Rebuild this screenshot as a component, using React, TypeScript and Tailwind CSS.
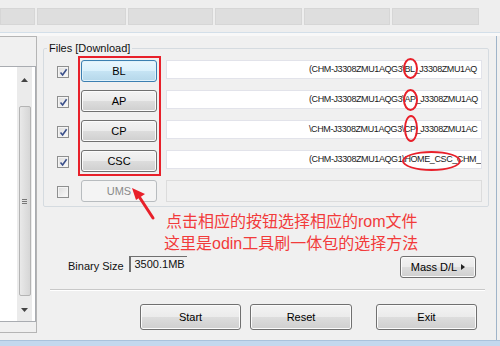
import React from 'react';

const ui = "font-['Liberation_Sans_Narrow','Liberation_Sans',Arial,sans-serif]";
const cjk = "font-['Liberation_Sans','Noto_Sans_CJK_SC',sans-serif]";

const topTabs = [35, 89, 85, 87, 86, 87];

const files = [
  { label: 'BL', path: '(CHM-J3308ZMU1AQG3\\BL_J3308ZMU1AQ', focused: true },
  { label: 'AP', path: '(CHM-J3308ZMU1AQG3\\AP_J3308ZMU1AQ' },
  { label: 'CP', path: '\\CHM-J3308ZMU1AQG3\\CP_J3308ZMU1AC' },
  { label: 'CSC', path: '(CHM-J3308ZMU1AQG1\\HOME_CSC_CHM_' },
];

const Check = ({ checked }: { checked: boolean }) => (
  <div className="mt-[6px] flex h-[12px] w-[12px] items-center justify-center border border-[#8e8f8f] bg-[linear-gradient(135deg,#dcdcdc,#fbfbfb)] shadow-[inset_0_0_0_1px_#f4f4f4]">
    {checked && (
      <svg width="9" height="9" viewBox="0 0 9 9">
        <path d="M1.5 4.5 L3.6 7 L7.6 1.2" fill="none" stroke="#3a4f8a" strokeWidth="1.6" />
      </svg>
    )}
  </div>
);

const WinButton = ({
  children,
  focused,
  disabled,
  className,
}: {
  children: React.ReactNode;
  focused?: boolean;
  disabled?: boolean;
  className: string;
}) => {
  let look =
    'border-[#707070] bg-[linear-gradient(#f3f3f3_0%,#ebebeb_50%,#dddddd_50%,#cfcfcf_100%)] text-black shadow-[inset_0_0_0_1px_#fbfbfb]';
  if (focused)
    look =
      'border-[#3c7fb1] bg-[linear-gradient(#eaf6fd_0%,#d9f0fc_50%,#c6e4f4_50%,#b5d7ea_100%)] text-black shadow-[inset_0_0_0_1px_#e0f2fb]';
  if (disabled) look = 'border-[#b8bcbf] bg-[#f4f4f4] text-[#8a8a8a]';
  return (
    <div className={`flex items-center justify-center rounded-[3px] border text-[11px] ${look} ${className}`}>
      {children}
    </div>
  );
};

export default function App() {
  return (
    <div className={`relative h-[346px] w-[500px] overflow-hidden bg-[#f0f0f0] ${ui}`}>
      {/* top strip */}
      <div className="h-[33px] border-b border-[#d3dfe9] bg-[#eeeeee] pt-[8px]">
        <div className="flex gap-[2px]">
          {topTabs.map((w, i) => (
            <div key={i} style={{ width: w }} className="h-[17px] border border-[#d6d6d6] bg-[#dedede]" />
          ))}
        </div>
      </div>
      <div className="h-[3px] bg-[#f8f8f8]" />

      <div className="flex h-[304px]">
        {/* left log panel */}
        <div className="h-[297px] w-[37px] border-t border-r border-b border-[#b5b5b5] pt-[29px]">
          <div className="flex h-[256px] w-[36px] border-t border-r border-b border-[#a9acb1] bg-white">
            <div className="w-[17px]" />
            <div className="flex w-[15px] flex-col items-center bg-[#ebebeb]">
              <svg width="7" height="4" viewBox="0 0 7 4" className="mt-[11px]">
                <path d="M0 4 L3.5 0 L7 4 Z" fill="#444" />
              </svg>
              <div className="mt-[24px] flex h-[190px] w-[12px] flex-col items-center justify-center rounded-[2px] border border-[#b4b4b4] bg-[linear-gradient(90deg,#e9e9e9,#d6d6d6)]">
                <div className="h-[1px] w-[5px] bg-[#777]" />
                <div className="mt-[1px] h-[1px] w-[5px] bg-[#777]" />
                <div className="mt-[1px] h-[1px] w-[5px] bg-[#777]" />
              </div>
              <svg width="7" height="4" viewBox="0 0 7 4" className="mt-[12px]">
                <path d="M0 0 L3.5 4 L7 0 Z" fill="#444" />
              </svg>
            </div>
          </div>
        </div>

        {/* main */}
        <div className="h-[304px] w-[460px] border-r border-[#9fb4c9]">
          <fieldset className="ml-[6px] mt-[6px] w-[446px] rounded-[2px] border border-[#d5dbe0] px-0 pt-[5px] pb-[4px]">
            <legend className="ml-[3px] px-[2px] text-[11px] leading-[13px] text-[#111]">Files [Download]</legend>
            <div className="flex flex-col gap-[8px]">
              {files.map((f) => (
                <div key={f.label} className="flex h-[22px] items-start">
                  <div className="ml-[13px]">
                    <Check checked />
                  </div>
                  <WinButton focused={f.focused} className="ml-[12px] h-[22px] w-[76px]">
                    {f.label}
                  </WinButton>
                  <div className="ml-[9px] h-[19px] w-[316px] overflow-hidden whitespace-nowrap border border-[#e2e3ea] bg-white pl-[142px] text-[9px] leading-[17px] tracking-[-0.4px] text-[#1a1a1a]">
                    {f.path}
                  </div>
                </div>
              ))}
              <div className="flex h-[22px] items-start">
                <div className="ml-[13px]">
                  <Check checked={false} />
                </div>
                <WinButton disabled className="ml-[12px] h-[22px] w-[76px]">
                  UMS
                </WinButton>
                <div className="ml-[9px] h-[22px] w-[316px] border border-[#dcdcdc] bg-[#f0f0f0]" />
              </div>
            </div>
          </fieldset>

          {/* annotation text */}
          <div className={`mt-[4px] pl-[129px] text-[16px] leading-[22px] text-[#f23b3b] ${cjk}`}>
            <div>点击相应的按钮选择相应的rom文件</div>
            <div className="-ml-[2px]">这里是odin工具刷一体包的选择方法</div>
          </div>

          {/* binary size row */}
          <div className="mt-[1px] flex h-[22px] items-start">
            <div className="ml-[31px] mt-[3px] text-[11px] leading-[14px] text-[#111]">Binary Size</div>
            <div className="ml-[5px] h-[16px] w-[58px] border-t border-l-2 border-[#6f6f6f] pr-[2px] text-right text-[11px] leading-[15px] text-[#111]">
              3500.1MB
            </div>
            <WinButton className="ml-auto mr-[20px] h-[22px] w-[76px] gap-[4px]">
              <span>Mass D/L</span>
              <svg width="4" height="6" viewBox="0 0 4 6">
                <path d="M0 0 L4 3 L0 6 Z" fill="#222" />
              </svg>
            </WinButton>
          </div>

          <div className="ml-[13px] mt-[11px] w-[435px] border-t border-b border-t-[#c8c8c8] border-b-white" />

          {/* action buttons */}
          <div className="mt-[13px] flex">
            <WinButton className="ml-[103px] h-[26px] w-[101px]">Start</WinButton>
            <WinButton className="ml-[9px] h-[26px] w-[102px]">Reset</WinButton>
            <WinButton className="ml-[24px] h-[26px] w-[101px]">Exit</WinButton>
          </div>
        </div>
      </div>

      <div className="h-[6px] border-t border-[#a9c2dc] bg-[#c3d8ee]" />

      {/* red annotations */}
      <div className="absolute left-[78px] top-[56px] h-[120px] w-[83px] border-2 border-[#e8202a]" />
      <div className="absolute left-[403px] top-[58px] h-[21px] w-[15px] rounded-[50%] border-2 border-[#e8202a]" />
      <div className="absolute left-[403px] top-[89px] h-[22px] w-[15px] rounded-[50%] border-2 border-[#e8202a]" />
      <div className="absolute left-[404px] top-[115px] h-[27px] w-[14px] rounded-[50%] border-2 border-[#e8202a]" />
      <div className="absolute left-[402px] top-[151px] h-[20px] w-[59px] rounded-[50%] border-2 border-[#e8202a]" />
      <svg className="absolute left-[126px] top-[184px]" width="34" height="38" viewBox="0 0 34 38">
        <path d="M27 34 L14 14" stroke="#e8202a" strokeWidth="3" strokeLinecap="round" />
        <path d="M6 4 L19 10 L10 16 Z" fill="#e8202a" />
      </svg>
    </div>
  );
}
